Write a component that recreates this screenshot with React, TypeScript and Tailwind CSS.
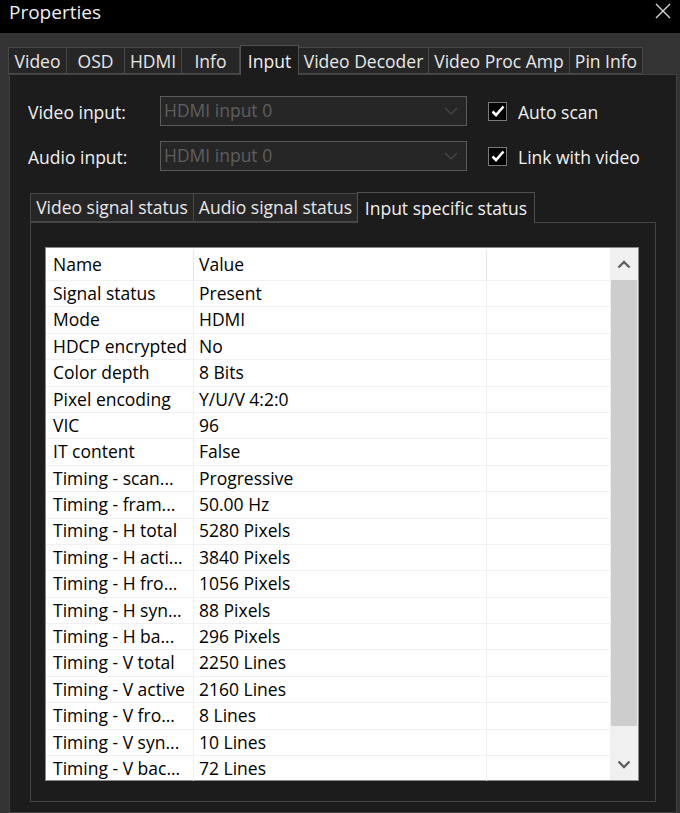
const mainTabs = ["Video", "OSD", "HDMI", "Info", "Input", "Video Decoder", "Video Proc Amp", "Pin Info"];
const tabWidths = [59, 59, 58, 59, 59, 131, 142, 74];

const rows: [string, string][] = [
  ["Signal status", "Present"],
  ["Mode", "HDMI"],
  ["HDCP encrypted", "No"],
  ["Color depth", "8 Bits"],
  ["Pixel encoding", "Y/U/V 4:2:0"],
  ["VIC", "96"],
  ["IT content", "False"],
  ["Timing - scan...", "Progressive"],
  ["Timing - fram...", "50.00 Hz"],
  ["Timing - H total", "5280 Pixels"],
  ["Timing - H acti...", "3840 Pixels"],
  ["Timing - H fro...", "1056 Pixels"],
  ["Timing - H syn...", "88 Pixels"],
  ["Timing - H ba...", "296 Pixels"],
  ["Timing - V total", "2250 Lines"],
  ["Timing - V active", "2160 Lines"],
  ["Timing - V fro...", "8 Lines"],
  ["Timing - V syn...", "10 Lines"],
  ["Timing - V bac...", "72 Lines"],
];

function Combo({ value }: { value: string }) {
  return (
    <div className="w-[307px] h-[30px] border border-[#5a5a5a] bg-[#262626] flex items-center justify-between pl-[3px] pr-[8px]">
      <span className="text-[#5f5f5f]">{value}</span>
      <svg width="14" height="8" viewBox="0 0 14 8">
        <path d="M1 1 L7 7 L13 1" stroke="#4a4a4a" strokeWidth="1.2" fill="none" />
      </svg>
    </div>
  );
}

function Check({ label }: { label: string }) {
  return (
    <div className="flex items-center ml-[21px]">
      <div className="w-[19px] h-[19px] bg-black border border-[#7a7a7a] flex items-center justify-center">
        <svg width="14" height="12" viewBox="0 0 14 12">
          <path d="M1.5 6.5 L5 10 L12.5 1.5" stroke="#ffffff" strokeWidth="2.6" fill="none" />
        </svg>
      </div>
      <span className="ml-[11px] mt-[3px] text-[#f0f0f0]">{label}</span>
    </div>
  );
}

export default function App() {
  return (
    <div
      className="w-[680px] h-[813px] bg-[#333333] overflow-hidden flex flex-col text-[17.5px] leading-none"
      style={{ fontFamily: '"Open Sans", "Noto Sans", sans-serif' }}
    >
      <div className="h-[33px] bg-black flex items-start justify-between pl-[9px] pr-[8px] shrink-0">
        <span className="text-[19px] leading-[24px] text-[#f0f0f0]">Properties</span>
        <svg width="18" height="18" viewBox="0 0 18 18" className="mt-[2px]">
          <path d="M2 2 L16 16 M16 2 L2 16" stroke="#d8d8d8" strokeWidth="1.4" />
        </svg>
      </div>

      <div className="flex-1 flex flex-col pt-[12px] pl-[8px] pr-[3px]">
        <div className="flex items-end h-[29px] shrink-0">
          {mainTabs.map((t, i) => {
            const sel = t === "Input";
            return (
              <div
                key={t}
                style={{ width: tabWidths[i] }}
                className={
                  sel
                    ? "h-[30px] -mb-[1px] relative z-10 bg-[#1c1c1c] border border-b-0 border-[#505050] flex items-center justify-center pt-[2px] text-[#f0f0f0] whitespace-nowrap"
                    : "h-[27px] bg-[#262626] border border-[#484848] flex items-center justify-center pt-[2px] text-[#e8e8e8] -ml-[1px] first:ml-0 whitespace-nowrap"
                }
              >
                {t}
              </div>
            );
          })}
        </div>

        <div className="flex-1 ml-[1px] border border-[#404040] bg-[#1c1c1c] flex flex-col pl-[18px] pt-[21px]">
          <div className="flex items-center">
            <span className="w-[132px] mt-[4px] text-[#f0f0f0]">Video input:</span>
            <Combo value="HDMI input 0" />
            <Check label="Auto scan" />
          </div>
          <div className="flex items-center mt-[15px]">
            <span className="w-[132px] mt-[4px] text-[#f0f0f0]">Audio input:</span>
            <Combo value="HDMI input 0" />
            <Check label="Link with video" />
          </div>

          <div className="mt-[21px] flex items-end h-[30px] ml-[2px]">
            <div className="w-[164px] h-[29px] bg-[#262626] border border-[#484848] flex items-center justify-center pt-[1px] text-[#e8e8e8] whitespace-nowrap">
              Video signal status
            </div>
            <div className="w-[165px] -ml-[1px] h-[29px] bg-[#262626] border border-[#484848] flex items-center justify-center pt-[1px] text-[#e8e8e8] whitespace-nowrap">
              Audio signal status
            </div>
            <div className="w-[178px] -ml-[1px] h-[31px] -mb-[1px] relative z-10 bg-[#1c1c1c] border border-b-0 border-[#505050] flex items-center justify-center pt-[1px] text-[#f0f0f0] whitespace-nowrap">
              Input specific status
            </div>
          </div>

          <div className="ml-[2px] w-[626px] h-[580px] border border-[#454545] pl-[14px] pt-[24px]">
            <div className="w-[594px] h-[534px] bg-white border border-[#8a8a8a] flex text-[#000000]">
              <div className="flex-1 flex flex-col">
                <div className="h-[32px] flex shrink-0">
                  <div className="w-[148px] pl-[7px] flex items-center border-r border-[#e5e5e5] mt-[2px]">Name</div>
                  <div className="w-[293px] pl-[5px] flex items-center border-r border-[#e5e5e5] mt-[2px]">Value</div>
                  <div className="flex-1" />
                </div>
                {rows.map(([n, v]) => (
                  <div key={n} className="h-[26.4px] flex border-t border-[#f0f0f0] shrink-0">
                    <div className="w-[148px] pl-[7px] flex items-center border-r border-[#f0f0f0] whitespace-nowrap overflow-hidden">
                      {n}
                    </div>
                    <div className="w-[293px] pl-[5px] flex items-center border-r border-[#f0f0f0] whitespace-nowrap">
                      {v}
                    </div>
                    <div className="flex-1" />
                  </div>
                ))}
              </div>
              <div className="w-[28px] bg-[#f0f0f0] flex flex-col">
                <div className="h-[32px] flex items-center justify-center shrink-0">
                  <svg width="14" height="9" viewBox="0 0 14 9">
                    <path d="M1.5 7.5 L7 2 L12.5 7.5" stroke="#606060" strokeWidth="2.4" fill="none" />
                  </svg>
                </div>
                <div className="h-[446px] bg-[#cdcdcd] mx-[1px]" />
                <div className="flex-1 flex items-end justify-center pb-[11px]">
                  <svg width="14" height="9" viewBox="0 0 14 9">
                    <path d="M1.5 1.5 L7 7 L12.5 1.5" stroke="#606060" strokeWidth="2.4" fill="none" />
                  </svg>
                </div>
              </div>
            </div>
          </div>
        </div>
      </div>
    </div>
  );
}
